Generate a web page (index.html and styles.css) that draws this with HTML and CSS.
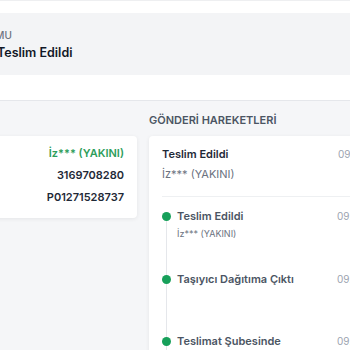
FILE: index.html
```html
<!DOCTYPE html>
<html lang="tr">
<head>
    <meta charset="UTF-8">
    <meta name="viewport" content="width=device-width, initial-scale=1.0">
    <title>Gönderi Takip</title>
    <link rel="stylesheet" href="styles.css">
</head>
<body>
    <header class="page-head">
        <div class="status-panel">
            <div class="status-label">GÖNDERİ DURUMU</div>
            <div class="status-title">Teslim Edildi</div>
        </div>
    </header>

    <main class="content">
        <!-- alıcı bilgileri -->
        <section class="column column-left">
            <h3 class="section-title">ALICI BİLGİLERİ</h3>
            <div class="card info-card">
                <div class="info-row">
                    <span class="info-label">Teslim Alan</span>
                    <span class="info-value green">İz*** (YAKINI)</span>
                </div>
                <div class="info-row">
                    <span class="info-label">Gönderi No</span>
                    <span class="info-value">3169708280</span>
                </div>
                <div class="info-row">
                    <span class="info-label">Takip No</span>
                    <span class="info-value">P01271528737</span>
                </div>
            </div>
        </section>

        <!-- hareketler -->
        <section class="column column-right">
            <h3 class="section-title">GÖNDERİ HAREKETLERİ</h3>
            <div class="card moves-card">
                <div class="moves-head">
                    <div>
                        <div class="moves-title">Teslim Edildi</div>
                        <div class="moves-sub">İz*** (YAKINI)</div>
                    </div>
                    <span class="time">09.10.2024 14:32</span>
                </div>
                <ul class="timeline">
                    <li class="step">
                        <div>
                            <div class="step-title">Teslim Edildi</div>
                            <div class="step-sub">İz*** (YAKINI)</div>
                        </div>
                        <span class="time">09.10.2024 14:32</span>
                    </li>
                    <li class="step">
                        <div>
                            <div class="step-title">Taşıyıcı Dağıtıma Çıktı</div>
                        </div>
                        <span class="time">09.10.2024 09:15</span>
                    </li>
                    <li class="step">
                        <div>
                            <div class="step-title">Teslimat Şubesinde</div>
                        </div>
                        <span class="time">09.10.2024 07:48</span>
                    </li>
                </ul>
            </div>
        </section>
    </main>
</body>
</html>
```

FILE: styles.css
```css
* {
    margin: 0;
    padding: 0;
    box-sizing: border-box;
}

html, body {
    overflow: hidden;
}

body {
    background: #f5f6f8;
    font-family: Inter, "Noto Sans", Arial, sans-serif;
    color: #1f2937;
}

.page-head {
    background: white;
    border-top: 1px solid #eeeff1;
    border-bottom: 1px solid #e5e7eb;
    padding: 12px 0 25px;
}

.status-panel {
    height: 62px;
    background: #f3f4f6;
    padding-top: 16px;
}

.status-label {
    margin-left: -81px;
    font-size: 10px;
    line-height: 12px;
    font-weight: 500;
    color: #6b7280;
    white-space: nowrap;
}

.status-title {
    margin-top: 3px;
    margin-left: -3px;
    font-size: 12.5px;
    line-height: 18px;
    font-weight: 600;
    color: #111827;
}

/* içerik */
.content {
    display: grid;
    grid-template-columns: 300px 282px;
    gap: 12px;
    margin-left: -163px;
    padding-top: 12px;
}

.section-title {
    font-size: 11px;
    line-height: 14px;
    font-weight: 600;
    color: #4b5563;
    margin-bottom: 9px;
    white-space: nowrap;
}

.card {
    background: white;
    border-radius: 4px;
    box-shadow: 0 1px 4px rgba(0, 0, 0, 0.07);
}

.info-card {
    padding: 6px 13px 10px;
}

.info-row {
    display: flex;
    justify-content: space-between;
    font-size: 11px;
    line-height: 22px;
}

.info-label {
    color: #6b7280;
}

.info-value {
    font-weight: 600;
    color: #1f2937;
}

.info-value.green {
    color: #2e9e5b;
}

.moves-card {
    padding-top: 10px;
    min-height: 300px;
}

.moves-head {
    display: grid;
    grid-template-columns: 1fr 80px;
    margin: 0 13px;
    padding-bottom: 14px;
    border-bottom: 1px solid #eef0f2;
}

.moves-title {
    font-size: 11px;
    line-height: 16px;
    font-weight: 600;
    color: #1f2937;
}

.moves-sub {
    margin-top: 4px;
    font-size: 11px;
    line-height: 16px;
    color: #6b7280;
}

.time {
    font-size: 10px;
    line-height: 16px;
    color: #9ca3af;
    white-space: nowrap;
}

.timeline {
    list-style: none;
    position: relative;
    margin: 11px 0 0 17px;
    padding-left: 11px;
}

.timeline::before {
    content: "";
    position: absolute;
    left: 0;
    top: 8px;
    bottom: 0;
    width: 1px;
    background: #e5e7eb;
}

.step {
    position: relative;
    display: grid;
    grid-template-columns: 160px 80px;
    height: 62.5px;
}

.step::before {
    content: "";
    position: absolute;
    left: -15px;
    top: 4px;
    width: 9px;
    height: 9px;
    border-radius: 50%;
    background: #17a05a;
}

.step-title {
    font-size: 11px;
    line-height: 16px;
    font-weight: 600;
    color: #4b5563;
    white-space: nowrap;
}

.step-sub {
    margin-top: 4px;
    font-size: 9px;
    line-height: 12px;
    color: #6b7280;
}
```
